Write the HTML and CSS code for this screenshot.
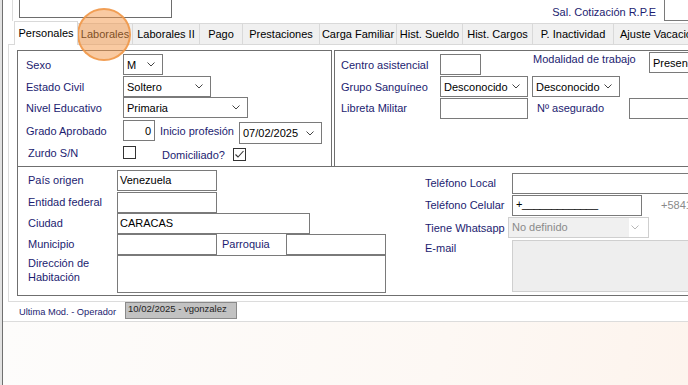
FILE: index.html
```html
<!DOCTYPE html>
<html lang="es">
<head>
<meta charset="utf-8">
<title>Personales</title>
<link rel="stylesheet" href="styles.css">
</head>
<body>
<div class="frame">
  <div class="edge"></div>
  <div class="main">
    <div class="top">
      <div class="topgrp"><div class="topbox"></div></div>
      <div class="lbl rpe-lbl">Sal. Cotización R.P.E</div>
      <div class="rpe-inp"></div>
    </div>

    <div class="tabs">
      <div class="tab active w64">Personales</div>
      <div class="tab w55">Laborales</div>
      <div class="tab w67">Laborales II</div>
      <div class="tab w43">Pago</div>
      <div class="tab w77">Prestaciones</div>
      <div class="tab w77">Carga Familiar</div>
      <div class="tab w66">Hist. Sueldo</div>
      <div class="tab w70">Hist. Cargos</div>
      <div class="tab w81">P. Inactividad</div>
      <div class="tab w110">Ajuste Vacaciones</div>
    </div>

    <div class="panel">
      <div class="uprow">
        <div class="gbox gb-left">
          <div class="row">
            <div class="lbl lw97">Sexo</div>
            <div class="ctl sel w40"><span>M</span><svg class="chev" width="8" height="5" viewBox="0 0 8 5"><path d="M0.5 0.5L4 4L7.5 0.5" fill="none" stroke="#444"/></svg></div>
          </div>
          <div class="row mt1">
            <div class="lbl lw97">Estado Civil</div>
            <div class="ctl sel w88"><span>Soltero</span><svg class="chev" width="8" height="5" viewBox="0 0 8 5"><path d="M0.5 0.5L4 4L7.5 0.5" fill="none" stroke="#444"/></svg></div>
          </div>
          <div class="row">
            <div class="lbl lw97">Nivel Educativo</div>
            <div class="ctl sel w125"><span>Primaria</span><svg class="chev" width="8" height="5" viewBox="0 0 8 5"><path d="M0.5 0.5L4 4L7.5 0.5" fill="none" stroke="#444"/></svg></div>
          </div>
          <div class="row mt2">
            <div class="lbl lw97">Grado Aprobado</div>
            <div class="ctl num w32">0</div>
            <div class="lbl inicio">Inicio profesión</div>
            <div class="ctl sel date"><span>07/02/2025</span><svg class="chev" width="8" height="5" viewBox="0 0 8 5"><path d="M0.5 0.5L4 4L7.5 0.5" fill="none" stroke="#444"/></svg></div>
          </div>
          <div class="row row-chk">
            <div class="lbl lw95 zurdo">Zurdo S/N</div>
            <div class="chk"></div>
            <div class="lbl domic">Domiciliado?</div>
            <div class="chk chk-on"><svg width="11" height="11" viewBox="0 0 11 11"><path d="M1.5 5.5L4 8L9.5 2" fill="none" stroke="#333" stroke-width="1.1"/></svg></div>
          </div>
        </div>

        <div class="gbox gb-right">
          <div class="row">
            <div class="lbl lw99">Centro asistencial</div>
            <div class="ctl w41"></div>
            <div class="lbl modal">Modalidad de trabajo</div>
            <div class="ctl modal-inp">Presencial</div>
          </div>
          <div class="row mt1">
            <div class="lbl lw99">Grupo Sanguíneo</div>
            <div class="ctl sel w88"><span>Desconocido</span><svg class="chev" width="8" height="5" viewBox="0 0 8 5"><path d="M0.5 0.5L4 4L7.5 0.5" fill="none" stroke="#444"/></svg></div>
            <div class="ctl sel w88 ml4"><span>Desconocido</span><svg class="chev" width="8" height="5" viewBox="0 0 8 5"><path d="M0.5 0.5L4 4L7.5 0.5" fill="none" stroke="#444"/></svg></div>
          </div>
          <div class="row mt1 h20">
            <div class="lbl lw99">Libreta Militar</div>
            <div class="ctl w88 h20"></div>
            <div class="lbl aseg">Nº asegurado</div>
            <div class="ctl w80 h20"></div>
          </div>
        </div>
      </div>

      <div class="gbox gb-low">
        <div class="lc">
          <div class="row h20 mt3">
            <div class="lbl lw89">País origen</div>
            <div class="ctl w100 h20">Venezuela</div>
          </div>
          <div class="row h20 mt2">
            <div class="lbl lw89">Entidad federal</div>
            <div class="ctl w100 h20"></div>
          </div>
          <div class="row h20 mt1">
            <div class="lbl lw89">Ciudad</div>
            <div class="ctl w193 h20">CARACAS</div>
          </div>
          <div class="row h20 mt1">
            <div class="lbl lw89">Municipio</div>
            <div class="ctl w100 h20"></div>
            <div class="lbl parr">Parroquia</div>
            <div class="ctl w100 h20"></div>
          </div>
          <div class="row row-dir mt1">
            <div class="lbl lw89 dir">Dirección de<br>Habitación</div>
            <div class="ctl area"></div>
          </div>
        </div>
        <div class="rc">
          <div class="row h20 mt6">
            <div class="lbl lw87">Teléfono Local</div>
            <div class="ctl w200 h20"></div>
          </div>
          <div class="row h20 mt2">
            <div class="lbl lw87">Teléfono Celular</div>
            <div class="ctl w130 h20 tel">+_____________</div>
            <div class="hint">+5841</div>
          </div>
          <div class="row mt2">
            <div class="lbl lw85">Tiene Whatsapp</div>
            <div class="ctl sel dis wsel"><span class="dis-txt">No definido</span><svg class="chev" width="8" height="5" viewBox="0 0 8 5"><path d="M0.5 0.5L4 4L7.5 0.5" fill="none" stroke="#b8b8b8"/></svg></div>
          </div>
          <div class="row row-mail mt2">
            <div class="lbl lw87 mail-lbl">E-mail</div>
            <div class="ctl mail"></div>
          </div>
        </div>
      </div>
    </div>

    <div class="footer">
      <div class="flbl">Ultima Mod. - Operador</div>
      <div class="fbox">10/02/2025 - vgonzalez</div>
    </div>
    <div class="rest"></div>
  </div>
</div>
<div class="spot"></div>
</body>
</html>
```

FILE: styles.css
```css
* { box-sizing: border-box; }
html, body { margin: 0; padding: 0; }
body {
  width: 688px;
  height: 385px;
  overflow: hidden;
  position: relative;
  background: #fff;
  font-family: "Liberation Sans", Arial, sans-serif;
  font-size: 11px;
  color: #000;
}
.frame { display: flex; height: 385px; }
.edge { flex: 0 0 3px; background: #e2e2e2; border-right: 1px solid #707070; }
.main { flex: 0 0 800px; display: flex; flex-direction: column; }

/* top strip */
.top { display: flex; height: 21px; }
.topgrp { margin-left: 9px; border-left: 1px solid #dcdcdc; padding-left: 6px; height: 21px; }
.topbox { width: 153px; height: 18px; border: 1px solid #6d6d6d; border-top: none; }
.rpe-lbl { width: 484px; text-align: right; padding-top: 5px; line-height: 14px; }
.rpe-inp { margin-left: 8px; width: 60px; height: 21px; border: 1px solid #7a7a7a; border-top: none; }

/* tabs */
.tabs { display: flex; align-items: flex-end; height: 23px; padding-left: 11px; }
.tab {
  flex: 0 0 auto;
  height: 21px;
  border: 1px solid #d9d9d9;
  border-left: none;
  border-bottom: none;
  background: #f0f0f0;
  display: flex;
  align-items: center;
  justify-content: center;
  white-space: nowrap;
  overflow: hidden;
}
.tab.active {
  height: 24px;
  margin-bottom: -1px;
  background: #fff;
  border-left: 1px solid #d9d9d9;
  position: relative;
  z-index: 1;
  padding-bottom: 2px;
}
.w64 { width: 64px; } .w55 { width: 55px; } .w67 { width: 67px; } .w43 { width: 43px; }
.w77 { width: 77px; } .w66 { width: 66px; } .w70 { width: 70px; } .w81 { width: 81px; }
.w110 { width: 110px; justify-content: flex-start; padding-left: 6px; }

/* panel */
.panel {
  margin-left: 5px;
  height: 258px;
  border-top: 1px solid #d9d9d9;
  border-left: 1px solid #dcdcdc;
  border-bottom: 1px solid #dcdcdc;
  padding: 5px 0 0 8px;
}
.uprow { display: flex; height: 117px; }
.gbox { border: 1px solid #6f6f6f; }
.gb-left { flex: 0 0 315px; padding: 3px 0 0 8px; }
.gb-right { flex: 0 0 420px; margin-left: 2px; padding: 3px 0 0 6px; }
.gb-low { margin-top: -1px; height: 130px; width: 780px; display: flex; }

.row { display: flex; align-items: center; height: 21px; }
.h20 { height: 20px; }
.mt1 { margin-top: 1px; } .mt2 { margin-top: 2px; } .mt3 { margin-top: 3px; } .mt6 { margin-top: 6px; }
.ml4 { margin-left: 4px; }

.lbl { color: #1c1c70; white-space: nowrap; flex: 0 0 auto; }
.lw97 { width: 97px; } .lw95 { width: 95px; } .lw99 { width: 99px; }
.lw89 { width: 89px; } .lw87 { width: 87px; } .lw85 { width: 85px; }

.ctl {
  flex: 0 0 auto;
  height: 21px;
  border: 1px solid #7a7a7a;
  background: #fff;
  display: flex;
  align-items: center;
  padding: 0 2px;
  white-space: nowrap;
  overflow: hidden;
}
.sel { justify-content: space-between; padding: 0 7px 0 3px; }
.chev { flex: 0 0 auto; }
.w40 { width: 40px; } .w88 { width: 88px; } .w125 { width: 125px; }
.w32 { width: 32px; } .w41 { width: 41px; } .w80 { width: 80px; }
.w100 { width: 100px; } .w193 { width: 193px; } .w200 { width: 200px; } .w130 { width: 130px; }
.num { justify-content: flex-end; padding-right: 3px; }
.inicio { margin-left: 5px; width: 79px; }
.date { width: 83px; height: 22px; align-self: flex-start; margin-top: 2px; }

.row-chk { height: 16px; margin-top: 4px; align-items: flex-start; }
.zurdo { margin-left: 2px; line-height: 16px; }
.chk { flex: 0 0 13px; width: 13px; height: 13px; border: 1px solid #333; margin-top: 1px; background: #fff; }
.chk-on { margin-top: 3px; display: flex; align-items: center; justify-content: center; }
.domic { margin-left: 26px; width: 71px; line-height: 16px; margin-top: 2px; }

.modal { margin-left: 52px; width: 116px; align-self: flex-start; line-height: 12px; margin-top: -1px; }
.modal-inp { width: 80px; align-self: flex-start; margin-top: -2px; padding-left: 3px; }
.aseg { margin-left: 9px; width: 92px; }

/* lower box */
.lc { flex: 0 0 407px; padding-left: 10px; }
.rc { flex: 0 0 auto; }
.parr { margin-left: 5px; width: 64px; }
.row-dir { height: 38px; align-items: flex-start; }
.dir { line-height: 14px; padding-top: 1px; }
.area { width: 269px; height: 38px; }
.tel { align-items: flex-start; padding-top: 2px; padding-left: 3px; letter-spacing: -0.3px; }
.hint { margin-left: 19px; color: #8a8a8a; }
.wsel { width: 141px; margin-left: -2px; border-color: #cfcfcf; padding: 0 9px 0 0; }
.dis-txt { background: #f0f0f0; color: #8a8a8a; height: 19px; line-height: 19px; width: 120px; padding-left: 3px; }
.row-mail { height: 52px; align-items: flex-start; }
.mail-lbl { line-height: 14px; padding-top: 1px; }
.mail { width: 200px; height: 52px; background: #eeeeee; border-color: #cfcfcf; }

/* footer */
.footer {
  display: flex;
  align-items: center;
  height: 20px;
  border-bottom: 1px solid #dcdcdc;
  padding-left: 16px;
}
.flbl { width: 106px; color: #1c1c70; font-size: 9.3px; white-space: nowrap; }
.fbox {
  align-self: flex-start;
  width: 112px;
  height: 17px;
  background: #c2c2c2;
  border: 1px solid #8a8a8a;
  font-size: 9.5px;
  color: #222;
  line-height: 12px;
  padding-left: 2px;
  white-space: nowrap;
}
.rest { flex: 1 1 auto; background: linear-gradient(100deg, #fdfcfb 0%, #fdf8f4 55%, #fdf2ea 100%); }

/* highlight marker */
.spot {
  position: absolute;
  left: 77px;
  top: 8px;
  width: 54px;
  height: 53px;
  border-radius: 50%;
  background: rgba(243, 150, 70, 0.5);
  border: 2px solid rgba(240, 150, 70, 0.85);
}
```
